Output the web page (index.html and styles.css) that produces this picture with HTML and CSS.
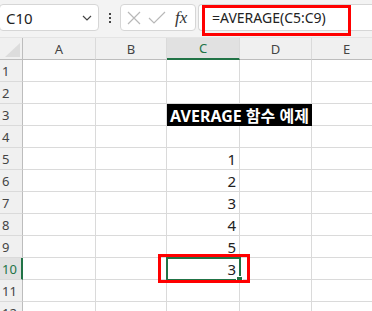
FILE: index.html
```html
<!DOCTYPE html>
<html>

<head>
    <meta name="viewport" content="width=device-width, initial-scale=1">
    <title>AVERAGE</title>
    <link rel="stylesheet" href="styles.css">
</head>

<body>
    <div class="topbar">
        <div class="namebox">
            <span>C10</span>
            <svg class="chevron" width="10" height="6" viewBox="0 0 10 6"><path d="M1 1 L5 5 L9 1" fill="none" stroke="#444" stroke-width="1.2"/></svg>
        </div>
        <div class="dots"><i></i><i></i><i></i></div>
        <div class="fxbox">
            <svg width="16" height="16" viewBox="0 0 16 16"><path d="M2 2 L14 14 M14 2 L2 14" stroke="#b8b8b8" stroke-width="1.2"/></svg>
            <svg width="18" height="16" viewBox="0 0 18 16"><path d="M1 8 L6 13 L17 2" fill="none" stroke="#b8b8b8" stroke-width="1.2"/></svg>
            <span class="fx">fx</span>
        </div>
        <div class="formula">
            <span>=AVERAGE(C5:C9)</span>
            <div class="mark formula-mark"></div>
        </div>
    </div>

    <div class="sheet">
        <div class="corner"><div class="tri"></div></div>
        <div class="ch">A</div>
        <div class="ch">B</div>
        <div class="ch active">C</div>
        <div class="ch">D</div>
        <div class="ch">E</div>

        <div class="rh">1</div><div class="c"></div><div class="c"></div><div class="c"></div><div class="c"></div><div class="c"></div>
        <div class="rh">2</div><div class="c"></div><div class="c"></div><div class="c"></div><div class="c"></div><div class="c"></div>
        <div class="rh">3</div><div class="c"></div><div class="c"></div><div class="c title">AVERAGE 함수 예제</div><div class="c"></div>
        <div class="rh">4</div><div class="c"></div><div class="c"></div><div class="c"></div><div class="c"></div><div class="c"></div>
        <div class="rh">5</div><div class="c"></div><div class="c"></div><div class="c num">1</div><div class="c"></div><div class="c"></div>
        <div class="rh">6</div><div class="c"></div><div class="c"></div><div class="c num">2</div><div class="c"></div><div class="c"></div>
        <div class="rh">7</div><div class="c"></div><div class="c"></div><div class="c num">3</div><div class="c"></div><div class="c"></div>
        <div class="rh">8</div><div class="c"></div><div class="c"></div><div class="c num">4</div><div class="c"></div><div class="c"></div>
        <div class="rh">9</div><div class="c"></div><div class="c"></div><div class="c num">5</div><div class="c"></div><div class="c"></div>
        <div class="rh active">10</div><div class="c"></div><div class="c"></div>
        <div class="c num selected">3
            <div class="sel-box"><i class="handle"></i></div>
            <div class="mark cell-mark"></div>
        </div>
        <div class="c"></div><div class="c"></div>
        <div class="rh">11</div><div class="c"></div><div class="c"></div><div class="c"></div><div class="c"></div><div class="c"></div>
        <div class="rh">12</div><div class="c"></div><div class="c"></div><div class="c"></div><div class="c"></div><div class="c"></div>
    </div>
</body>

</html>
```

FILE: styles.css
```css
:root {
    --bar-bg: #f3f3f3;
    --head-bg: #f0f0f0;
    --head-active: #e1e1e1;
    --grid-line: #dadada;
    --head-line: #bdbdbd;
    --green: #217346;
    --red: #ff0000;
    --text: #222222;
}

body {
    margin: 0;
    width: 372px;
    height: 311px;
    overflow: hidden;
    background: #ffffff;
    font-family: "Noto Sans", "Noto Sans CJK KR", sans-serif;
    color: var(--text);
}

.topbar {
    height: 38px;
    box-sizing: border-box;
    background: var(--bar-bg);
    border-bottom: 1px solid #e4e4e4;
    display: flex;
    padding-top: 4px;
}

.namebox,
.fxbox,
.formula {
    height: 27px;
    box-sizing: border-box;
    background: #ffffff;
    border: 1px solid #d6d6d6;
    border-radius: 4px;
    display: flex;
    align-items: center;
}

.namebox {
    width: 100px;
    margin-left: -1px;
    padding: 0 6px;
    justify-content: space-between;
    font-size: 15px;
}

.dots {
    width: 21px;
    display: flex;
    flex-direction: column;
    align-items: center;
    justify-content: center;
    gap: 2px;
    height: 27px;
}

.dots i {
    width: 2px;
    height: 2px;
    background: #444;
}

.fxbox {
    width: 76px;
    padding: 0 5px 0 5px;
    gap: 6px;
}

.fx {
    font-family: "Liberation Serif", serif;
    font-style: italic;
    font-size: 17px;
    color: #333;
    margin-left: 3px;
}

.formula {
    flex: 1;
    margin-left: 2px;
    border-right: none;
    border-radius: 4px 0 0 4px;
    padding-left: 13px;
    font-size: 14px;
    position: relative;
}

.mark {
    position: absolute;
    box-sizing: border-box;
    border: 3px solid var(--red);
}

.formula-mark {
    left: 3px;
    top: 0;
    width: 149px;
    height: 31px;
}

.sheet {
    display: grid;
    grid-template-columns: 23px 73px 71px 73px 72px 70px;
    grid-template-rows: 22px;
    grid-auto-rows: 22px;
    font-size: 13px;
}

.corner,
.ch,
.rh {
    background: var(--head-bg);
    box-sizing: border-box;
    color: #444;
}

.corner {
    border-right: 1px solid var(--head-line);
    border-bottom: 1px solid var(--head-line);
    padding: 5px 0 0 5px;
}

.tri {
    width: 0;
    height: 0;
    border-left: 15px solid transparent;
    border-bottom: 14px solid #dcdcdc;
}

.ch {
    border-right: 1px solid var(--grid-line);
    border-bottom: 1px solid var(--head-line);
    display: flex;
    align-items: center;
    justify-content: center;
}

.ch.active {
    background: var(--head-active);
    color: var(--green);
    border-bottom: 2px solid var(--green);
}

.rh {
    border-right: 1px solid var(--head-line);
    border-bottom: 1px solid var(--grid-line);
    display: flex;
    align-items: center;
    justify-content: flex-start;
    text-indent: 2px;
}

.rh.active {
    background: var(--head-active);
    color: var(--green);
    border-right: 2px solid var(--green);
}

.c {
    border-right: 1px solid var(--grid-line);
    border-bottom: 1px solid var(--grid-line);
    box-sizing: border-box;
}

.title {
    grid-column: span 2;
    background: #000000;
    color: #ffffff;
    font-weight: bold;
    font-size: 16px;
    display: flex;
    align-items: center;
    justify-content: center;
    border: none;
    white-space: nowrap;
}

.num {
    font-size: 15px;
    text-align: right;
    padding-right: 3px;
    line-height: 22px;
}

.selected {
    position: relative;
}

.sel-box {
    position: absolute;
    left: -1px;
    top: -1px;
    width: 75px;
    height: 24px;
    box-sizing: border-box;
    border: 2px solid var(--green);
}

.handle {
    position: absolute;
    right: -4px;
    bottom: -4px;
    width: 5px;
    height: 5px;
    background: var(--green);
    border: 1px solid #ffffff;
}

.cell-mark {
    left: -9px;
    top: -4px;
    width: 92px;
    height: 29px;
}
```
